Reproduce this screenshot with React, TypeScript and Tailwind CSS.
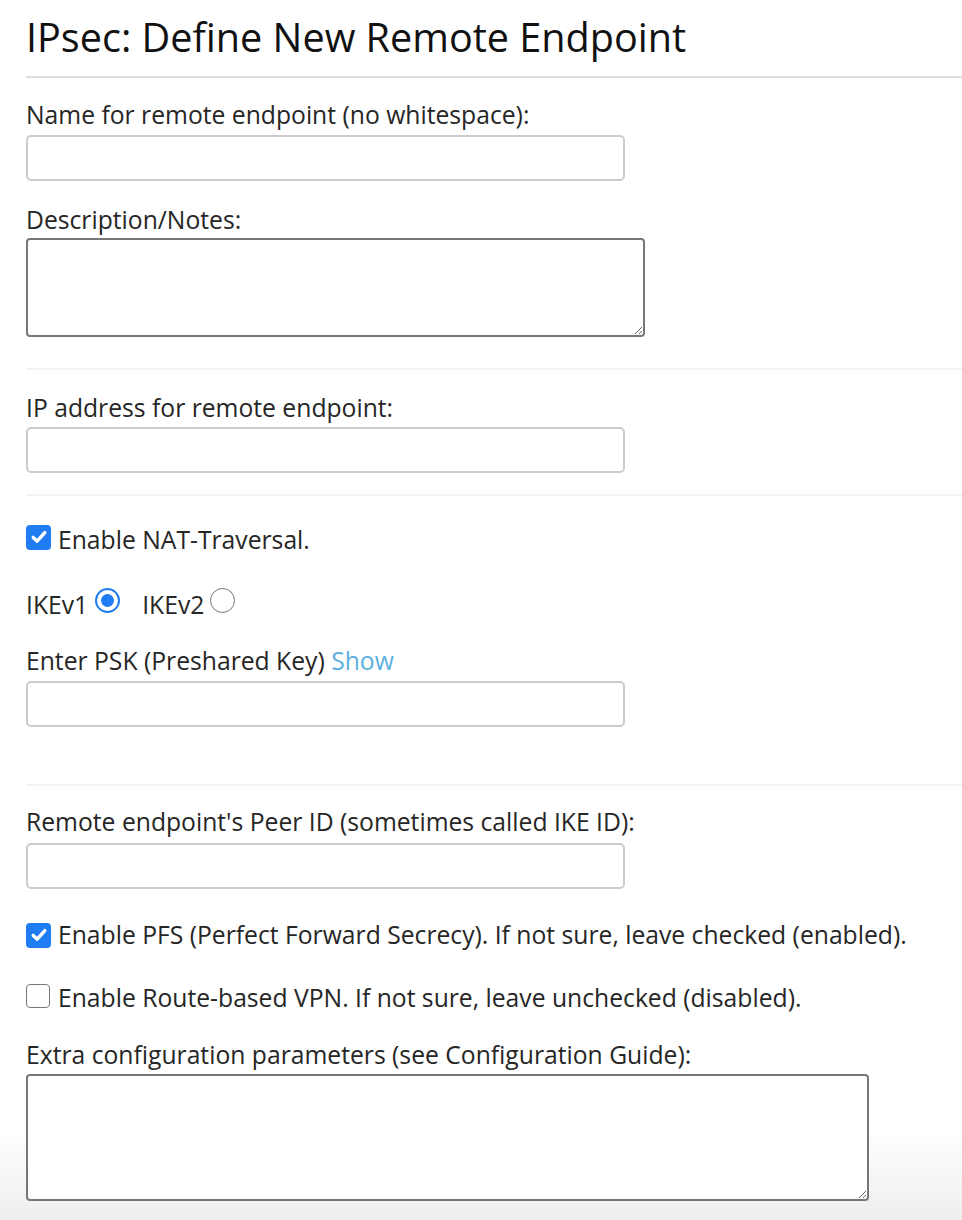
import React from "react";

function CheckBox({ checked, className = "" }: { checked: boolean; className?: string }) {
  if (checked) {
    return (
      <span className={`flex h-[25px] w-[25px] shrink-0 items-center justify-center rounded-[4px] bg-[#1f7cf2] ${className}`}>
        <svg width="18" height="18" viewBox="0 0 18 18" fill="none">
          <path d="M3.2 9.4 L7.2 13.2 L14.8 4.6" stroke="#ffffff" strokeWidth="3.4" strokeLinecap="round" strokeLinejoin="round" />
        </svg>
      </span>
    );
  }
  return <span className={`block h-[24px] w-[24px] shrink-0 rounded-[4px] border-[1.5px] border-[#767676] bg-white ${className}`} />;
}

function Radio({ checked, className = "" }: { checked: boolean; className?: string }) {
  if (checked) {
    return (
      <span className={`flex h-[25px] w-[25px] shrink-0 items-center justify-center rounded-full border-[2.5px] border-[#1f7cf2] bg-white ${className}`}>
        <span className="block h-[13px] w-[13px] rounded-full bg-[#1f7cf2]" />
      </span>
    );
  }
  return <span className={`block h-[25px] w-[25px] shrink-0 rounded-full border-[1.5px] border-[#767676] bg-white ${className}`} />;
}

const label = "text-[24.7px] leading-[30px] whitespace-nowrap";
const input = "block h-[46px] w-[599px] rounded-[5px] border-2 border-[#cccccc] bg-white outline-none";

export default function App() {
  return (
    <div className="min-h-[1220px] w-[962px] bg-[linear-gradient(to_bottom,#ffffff_0px,#ffffff_1130px,#eeeeee_1220px)] pl-[26px] font-['Open_Sans',sans-serif] text-[#262626]">
      <h1 className="pt-[13px] text-[39.6px] leading-[48px] text-[#111111]">IPsec: Define New Remote Endpoint</h1>
      <div className="mt-[15px] h-[2px] bg-[#dddddd]" />

      <div className={`mt-[22px] ${label}`}>Name for remote endpoint (no whitespace):</div>
      <input className={`mt-[5px] ${input}`} />

      <div className={`mt-[24px] ${label}`}>Description/Notes:</div>
      <textarea className="mt-[3px] block h-[99px] w-[619px] rounded-[4px] border-2 border-[#777777] bg-white outline-none" />

      <div className="mt-[31px] h-[2px] bg-[#f3f3f3]" />

      <div className={`mt-[23px] ${label}`}>IP address for remote endpoint:</div>
      <input className={`mt-[4px] ${input}`} />

      <div className="mt-[21px] h-[2px] bg-[#f3f3f3]" />

      <div className={`mt-[29px] flex h-[30px] items-center ${label}`}>
        <CheckBox checked className="-translate-y-[3px]" />
        <span className="ml-[7px]">Enable NAT-Traversal.</span>
      </div>

      <div className={`mt-[35px] flex h-[30px] items-center ${label}`}>
        <span>IKEv1</span>
        <Radio checked className="ml-[7px] -translate-y-[5px]" />
        <span className="ml-[22px]">IKEv2</span>
        <Radio checked={false} className="ml-[6px] -translate-y-[5px]" />
      </div>

      <div className={`mt-[26px] ${label}`}>
        Enter PSK (Preshared Key) <span className="text-[#5bb0e0]">Show</span>
      </div>
      <input className={`mt-[5px] ${input}`} />

      <div className="mt-[57px] h-[2px] bg-[#f3f3f3]" />

      <div className={`mt-[21px] ${label}`}>Remote endpoint's Peer ID (sometimes called IKE ID):</div>
      <input className={`mt-[6px] ${input}`} />

      <div className={`mt-[31px] flex h-[30px] items-center ${label}`}>
        <CheckBox checked className="h-[24px] w-[24px]" />
        <span className="ml-[7px]">Enable PFS (Perfect Forward Secrecy). If not sure, leave checked (enabled).</span>
      </div>

      <div className={`mt-[33px] flex h-[30px] items-center ${label}`}>
        <CheckBox checked={false} className="-translate-y-[2px]" />
        <span className="ml-[8px]">Enable Route-based VPN. If not sure, leave unchecked (disabled).</span>
      </div>

      <div className={`mt-[27px] ${label}`}>Extra configuration parameters (see Configuration Guide):</div>
      <textarea className="mt-[4px] block h-[127px] w-[843px] rounded-[4px] border-2 border-[#777777] bg-white outline-none" />
    </div>
  );
}
